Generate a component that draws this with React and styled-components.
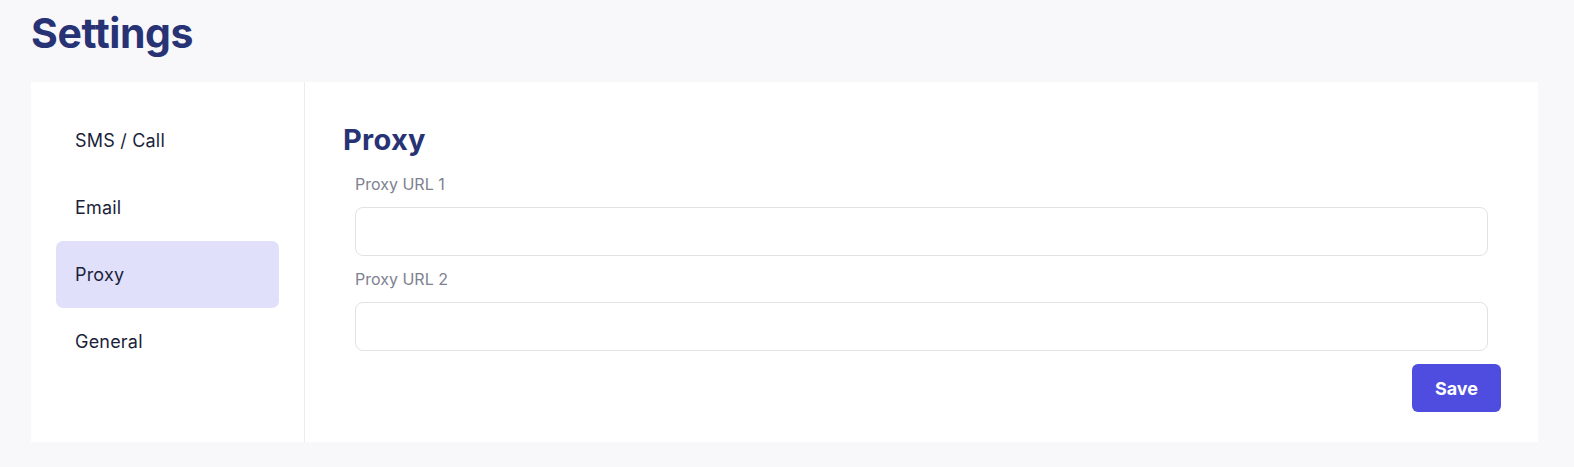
import { useState } from "react";
import styled, { createGlobalStyle } from "styled-components";

const GlobalStyle = createGlobalStyle`
    * {
        box-sizing: border-box;
    }
    html, body {
        overflow: hidden;
    }
    body {
        margin: 0;
        background-color: #F8F8FA;
        font-family: "Inter", "Liberation Sans", sans-serif;
    }
`;

const menus = ["SMS / Call", "Email", "Proxy", "General"];

function App() {
    const [active, setActive] = useState("Proxy");
    const [urls, setUrls] = useState({ first: "", second: "" });

    return (
        <>
            <GlobalStyle />
            <StPage>
                <StTitle>Settings</StTitle>
                <StCard>
                    <StSidebar>
                        {menus.map((menu) => {
                            return (
                                <StMenu
                                    key={menu}
                                    $active={active === menu}
                                    onClick={() => {
                                        setActive(menu);
                                    }}
                                >
                                    {menu}
                                </StMenu>
                            );
                        })}
                    </StSidebar>
                    <StContent>
                        <StHeading>Proxy</StHeading>
                        <StForm>
                            <StLabel>Proxy URL 1</StLabel>
                            <StInput
                                value={urls.first}
                                onChange={(e) => setUrls({ ...urls, first: e.target.value })}
                            />
                            <StLabel>Proxy URL 2</StLabel>
                            <StInput
                                value={urls.second}
                                onChange={(e) => setUrls({ ...urls, second: e.target.value })}
                            />
                        </StForm>
                        <StFooter>
                            <StButton>Save</StButton>
                        </StFooter>
                    </StContent>
                </StCard>
            </StPage>
        </>
    );
}

export default App;

const StPage = styled.div`
    padding: 4px 36px 25px 31px;
`;
const StTitle = styled.h1`
    margin: 0 0 20px;
    font-size: 41px;
    line-height: 58px;
    font-weight: 700;
    letter-spacing: -0.4px;
    color: #283375;
`;
const StCard = styled.div`
    display: flex;
    height: 360px;
    background-color: #FFFFFF;
`;
const StSidebar = styled.div`
    width: 274px;
    padding: 25px 25px;
    display: flex;
    flex-direction: column;
    border-right: 1px solid #EDEDF0;
`;
const StMenu = styled.div`
    height: 67px;
    display: flex;
    align-items: center;
    padding-left: 19px;
    border-radius: 7px;
    font-size: 18px;
    letter-spacing: 0.2px;
    color: #1B1F3B;
    cursor: pointer;
    background-color: ${(props) => (props.$active ? "#E0E0FB" : "transparent")};
`;
const StContent = styled.div`
    flex: 1;
    padding: 38px 37px 0 38px;
    display: flex;
    flex-direction: column;
`;
const StHeading = styled.h2`
    margin: 0 0 13px;
    font-size: 29px;
    line-height: 40px;
    font-weight: 700;
    letter-spacing: 0.3px;
    color: #283375;
`;
const StForm = styled.div`
    display: flex;
    flex-direction: column;
    padding: 0 13px 0 12px;
`;
const StLabel = styled.label`
    font-size: 16px;
    line-height: 22px;
    color: #7E8190;
    margin-bottom: 12px;
`;
const StInput = styled.input`
    height: 49px;
    border: 1px solid #E2E2E6;
    border-radius: 8px;
    padding: 0 14px;
    font-size: 16px;
    font-family: inherit;
    margin-bottom: 12px;
    outline: none;

    &:focus {
        border-color: #4F4DDF;
    }
    &:last-child {
        margin-bottom: 0;
    }
`;
const StFooter = styled.div`
    display: flex;
    justify-content: flex-end;
    margin-top: 13px;
`;
const StButton = styled.button`
    width: 89px;
    height: 48px;
    border: none;
    border-radius: 6px;
    background-color: #4F4DDF;
    color: #FFFFFF;
    font-family: inherit;
    font-size: 18px;
    font-weight: 700;
    cursor: pointer;
`;
